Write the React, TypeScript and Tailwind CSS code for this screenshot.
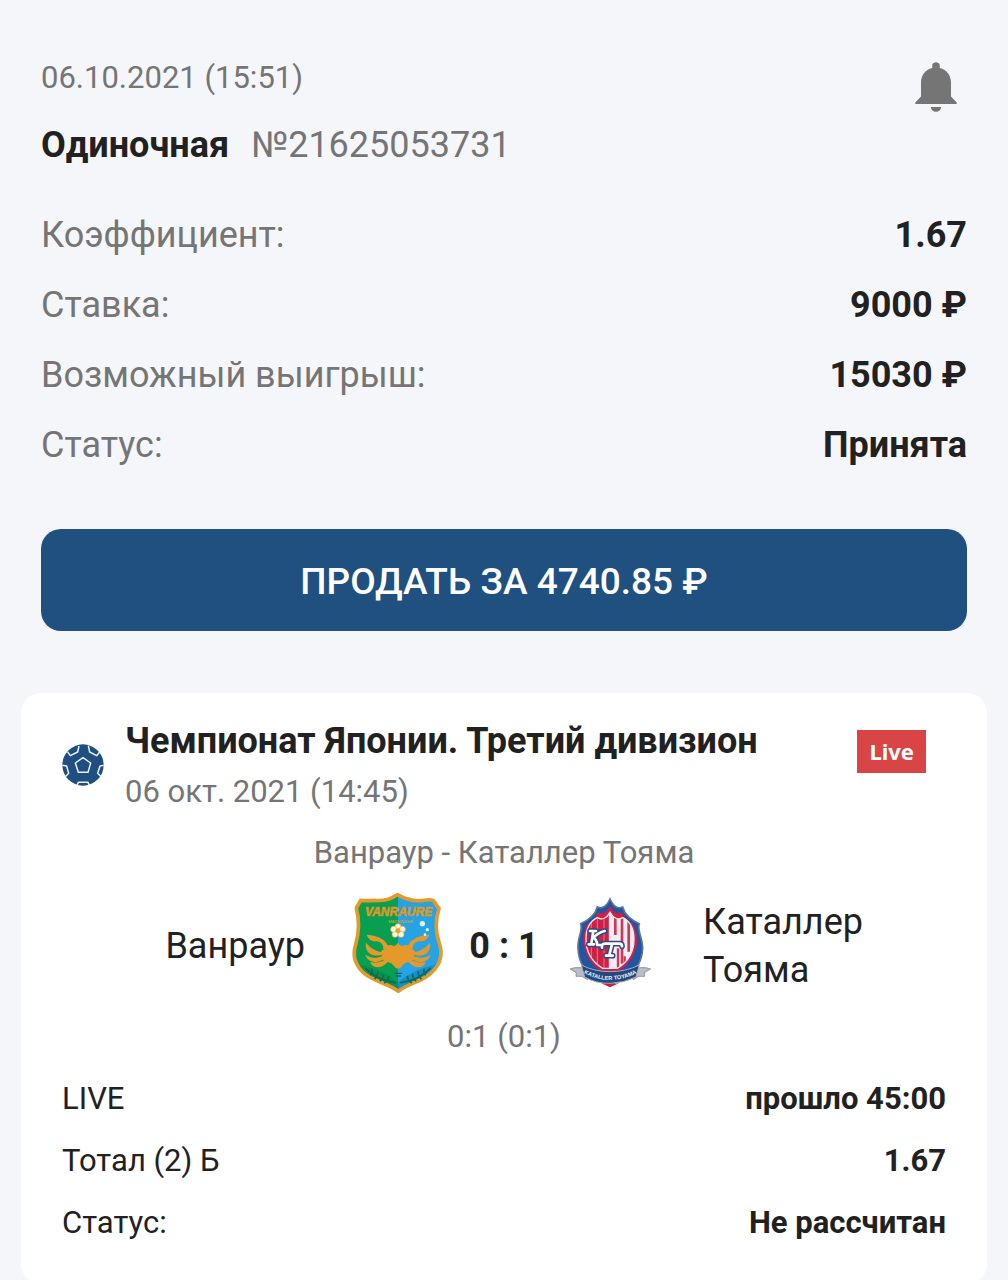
import React from "react";

function BellIcon() {
  return (
    <svg viewBox="0 0 42 50" className="h-[50px] w-[42px]" fill="#757575" aria-hidden="true">
      <path d="M17.2 6V3.8C17.2 1.5 18.8.2 21 .2s3.800 1.300 3.800 3.600V6C31.800 7.800 36 13.200 36 20.500V34.500L41.700 40.500V42H.3V40.500L6 34.500V20.500C6 13.200 10.200 7.800 17.200 6Z" />
      <path d="M15.800 45H26.200C25.800 48 23.800 49.800 21 49.800S16.200 48 15.800 45Z" />
    </svg>
  );
}

function BallIcon() {
  return (
    <svg viewBox="0 0 126 126" className="h-[42px] w-[42px] shrink-0" aria-hidden="true">
      <circle cx="63" cy="63" r="62" fill="#1f4f80" />
      <g fill="none" stroke="#e8f1f8" strokeWidth="4.500" strokeLinejoin="round">
        <path d="M63 41 86 57 78 85H49L40 57Z" />
        <path d="M17 24 25 35 47 24 51 6" />
        <path d="M79 5 83 24 104 35 113 24" />
        <path d="M1 64 14 66 20 88 10 98" />
        <path d="M125 64 114 66 107 88 117 98" />
        <path d="M45 124 49 115H78L82 124" />
      </g>
    </svg>
  );
}

function CrabLegs() {
  return (
    <>
      <path d="M146 204C142 184 120 166 80 164C86 180 96 184 110 184C124 186 130 194 130 208Z" />
      <path d="M128 217C112 215 92 206 78 188C74 206 84 222 102 226C112 228 122 226 132 222Z" />
      <path d="M132 226C114 236 94 236 76 224C82 244 104 250 120 243C128 240 134 234 138 230Z" />
      <path d="M140 236C126 246 108 250 90 246C96 262 114 266 128 258C138 252 144 246 146 240Z" />
    </>
  );
}

function VanraureCrest() {
  const shield =
    "M172 44C196 58 225 65 252 61Q270 57 280 62L297 86C286 118 284 150 298 190C309 222 301 252 276 276C252 304 208 308 175 334C142 308 96 304 68 276C44 252 38 222 47 194C58 155 58 118 49 84L62 61C80 62 92 62 104 61C132 64 154 56 172 44Z";
  return (
    <svg viewBox="18 36 309 309" className="h-[103px] w-[103px] shrink-0" role="img" aria-label="Ванраур">
      <defs>
        <clipPath id="van-shield">
          <path d={shield} />
        </clipPath>
      </defs>
      <g clipPath="url(#van-shield)">
        <rect x="18" y="36" width="157" height="309" fill="#08a050" />
        <rect x="174" y="36" width="153" height="309" fill="#26a3e2" />
        <path d="M40 250Q120 262 174 306V340H40Z" fill="#07914a" />
        <path d="M308 250Q228 262 174 306V340H308Z" fill="#148fcb" />
      </g>
      <path d={shield} fill="none" stroke="#e39a2b" strokeWidth="11" strokeLinejoin="round" />
      <text x="176" y="109" textAnchor="middle" fontFamily="Liberation Sans" fontWeight="bold" fontStyle="italic" fontSize="36" fill="#dfa02f" stroke="#d0922a" strokeWidth="2">
        VANRAURE
      </text>
      <text x="182" y="130" textAnchor="middle" fontFamily="Liberation Sans" fontWeight="bold" fontStyle="italic" fontSize="12" fill="#c9a13a">
        HACHINOHE
      </text>
      <g fill="#e39a2b">
        <path d="M134 206Q142 192 156 196Q166 202 174 188Q182 202 192 196Q206 192 214 206Q232 214 222 226Q226 240 210 246Q196 246 188 256Q182 266 174 266T160 256Q152 246 138 246Q122 240 126 226Q116 214 134 206Z" />
        <CrabLegs />
        <g transform="translate(348 0) scale(-1 1)">
          <CrabLegs />
        </g>
      </g>
      <g fill="#fff7dd" stroke="#e9b04c" strokeWidth="2">
        <circle cx="174" cy="140" r="9" />
        <circle cx="187" cy="148" r="9" />
        <circle cx="183" cy="163" r="9" />
        <circle cx="165" cy="163" r="9" />
        <circle cx="161" cy="148" r="9" />
        <circle cx="174" cy="152" r="7" fill="#e8a138" />
      </g>
      <g fill="#dff3ff">
        <circle cx="247" cy="131" r="8" />
        <circle cx="262" cy="149" r="5" />
        <circle cx="255" cy="164" r="4" />
      </g>
      <g fill="none" stroke="#0d6a55" strokeWidth="5" strokeLinecap="round">
        <path d="M78 266Q110 300 166 308M96 268Q98 278 92 284M114 276Q113 286 105 296M130 284Q131 294 121 302M146 290Q144 302 134 308" />
        <path d="M270 266Q238 300 182 308M252 268Q250 278 256 284M234 276Q235 286 243 296M218 284Q217 294 227 302M202 290Q204 302 214 308" />
      </g>
      <path d="M164 280H186M167 288H183" stroke="#24605e" strokeWidth="4" />
    </svg>
  );
}

function KatallerCrest() {
  const inner =
    "M168 82C178 100 192 106 206 98C226 108 240 128 240 162C240 202 220 232 190 250H146C116 232 96 202 96 162C96 128 110 108 130 98C144 106 158 100 168 82Z";
  return (
    <svg viewBox="15 21 309 309" className="h-[103px] w-[103px] shrink-0" role="img" aria-label="Каталлер Тояма">
      <defs>
        <clipPath id="kat-inner">
          <path d={inner} />
        </clipPath>
      </defs>
      <path
        d="M168 42C176 60 188 74 206 66C212 88 228 104 256 116C248 136 266 156 266 190C264 228 246 256 220 270L168 302L116 270C90 256 74 228 72 190C70 156 88 136 80 116C108 104 124 88 130 66C148 74 160 60 168 42Z"
        fill="#1f55a3"
        stroke="#5f7590"
        strokeWidth="5"
      />
      <path
        d="M168 62C176 80 190 90 204 82C210 98 224 110 238 120C246 138 252 156 248 180C242 216 220 244 190 260H146C116 244 94 216 90 180C86 156 90 138 98 120C112 110 126 98 132 82C146 90 160 80 168 62Z"
        fill="#cf2148"
      />
      <g clipPath="url(#kat-inner)">
        <rect x="90" y="76" width="84" height="180" fill="#cc2145" />
        <rect x="168" y="76" width="80" height="180" fill="#f4edf2" />
        <path d="M112 100V240M130 90V250M150 90V250" stroke="#e2798e" strokeWidth="3" />
        <path d="M184 98V150M204 98V236M224 110V200" stroke="#cf3657" strokeWidth="8" />
        <path d="M192 190V250M212 214V240" stroke="#cf3657" strokeWidth="7" />
        <path d="M168 80V250" stroke="#f8eef2" strokeWidth="7" />
      </g>
      <path d={inner} fill="none" stroke="#f3e8ee" strokeWidth="4" />
      <g fill="none" strokeLinecap="round" strokeLinejoin="round">
        <g stroke="#294b8c" strokeWidth="17">
          <path d="M108 138H126M118 138 112 176M104 178H120M152 138Q134 142 118 158Q128 162 130 180H142" />
          <path d="M144 188Q142 174 158 176H196Q204 176 204 184M174 178 166 210M156 212H176" />
        </g>
        <g stroke="#ffffff" strokeWidth="8">
          <path d="M108 138H126M118 138 112 176M104 178H120M152 138Q134 142 118 158Q128 162 130 180H142" />
          <path d="M144 188Q142 174 158 176H196Q204 176 204 184M174 178 166 210M156 212H176" />
        </g>
      </g>
      <path d="M48 252Q60 246 80 248L110 256L100 284L84 274L66 274L66 262Z" fill="#b9bec6" stroke="#6d7581" strokeWidth="2" />
      <path d="M290 252Q278 246 258 248L228 256L238 284L254 274L272 274L272 262Z" fill="#b9bec6" stroke="#6d7581" strokeWidth="2" />
      <path d="M82 240Q120 260 168 260T256 240L246 276Q210 294 168 295T92 276Z" fill="#24477f" stroke="#a7adba" strokeWidth="3" />
      <path d="M140 294Q168 300 196 294L168 307Z" fill="#c91f42" />
      <path id="kat-ribbon" d="M92 266Q130 285 168 285T246 266" fill="none" />
      <text fontFamily="Liberation Sans" fontWeight="bold" fontSize="17" fill="#f2f4f8" textAnchor="middle">
        <textPath href="#kat-ribbon" startOffset="50%">KATALLER TOYAMA</textPath>
      </text>
    </svg>
  );
}

const summary = [
  ["Коэффициент:", "1.67"],
  ["Ставка:", "9000 ₽"],
  ["Возможный выигрыш:", "15030 ₽"],
  ["Статус:", "Принята"],
];

const details = [
  ["LIVE", "прошло 45:00"],
  ["Тотал (2) Б", "1.67"],
  ["Статус:", "Не рассчитан"],
];

export default function App() {
  return (
    <main className="min-h-screen bg-[#f4f6fa] px-[21px] pt-[54px] font-['Roboto',sans-serif] text-[#212121]">
      <section className="px-5">
        <header className="flex items-start justify-between">
          <div>
            <p className="text-[31px] leading-[48px] text-[#757575]">06.10.2021 (15:51)</p>
            <h1 className="mt-4 flex items-center gap-[22px] text-[36px] leading-[54px]">
              <span className="font-bold">Одиночная</span>
              <span className="font-normal text-[#757575]">№21625053731</span>
            </h1>
          </div>
          <button type="button" aria-label="Уведомления" className="mt-2 mr-[10px]">
            <BellIcon />
          </button>
        </header>

        <dl className="mt-7">
          {summary.map(([label, value]) => (
            <div key={label} className="flex items-center justify-between text-[36px] leading-[70px]">
              <dt className="text-[#757575]">{label}</dt>
              <dd className="font-bold">{value}</dd>
            </div>
          ))}
        </dl>

        <button type="button" className="mt-[49px] h-[102px] w-full rounded-[20px] bg-[#1f5080] pt-1 text-[37px] font-medium text-white">
          ПРОДАТЬ ЗА 4740.85 ₽
        </button>
      </section>

      <section className="mt-[62px] rounded-[20px] bg-white px-[41px] pt-[21px] pb-[30px]">
        <header className="flex items-center gap-[21px]">
          <BallIcon />
          <div className="min-w-0 flex-1">
            <h2 className="text-[36px] leading-[54px] font-bold">Чемпионат Японии. Третий дивизион</h2>
            <p className="text-[31px] leading-[48px] text-[#757575]">06 окт. 2021 (14:45)</p>
          </div>
          <span className="mt-4 mr-5 self-start bg-[#d94446] px-3 font-['Noto_Sans',sans-serif] text-[22px] leading-[43px] font-bold text-white">
            Live
          </span>
        </header>

        <p className="mt-[13px] text-center text-[31px] leading-[48px] text-[#757575]">Ванраур - Каталлер Тояма</p>

        <div className="mt-[15px] flex items-center text-[36px] leading-[48px]">
          <span className="flex-1 pt-1 pr-[41px] text-right">Ванраур</span>
          <VanraureCrest />
          <strong className="w-[110px] pt-1 text-center font-bold">0 : 1</strong>
          <KatallerCrest />
          <span className="flex-1 pt-1 pl-[41px]">
            Каталлер
            <br />
            Тояма
          </span>
        </div>

        <p className="mt-[18px] text-center text-[31px] leading-[48px] text-[#757575]">0:1 (0:1)</p>

        <dl className="mt-[7px]">
          {details.map(([label, value]) => (
            <div key={label} className="flex items-center justify-between text-[31px] leading-[62px]">
              <dt>{label}</dt>
              <dd className="font-bold">{value}</dd>
            </div>
          ))}
        </dl>
      </section>
    </main>
  );
}
